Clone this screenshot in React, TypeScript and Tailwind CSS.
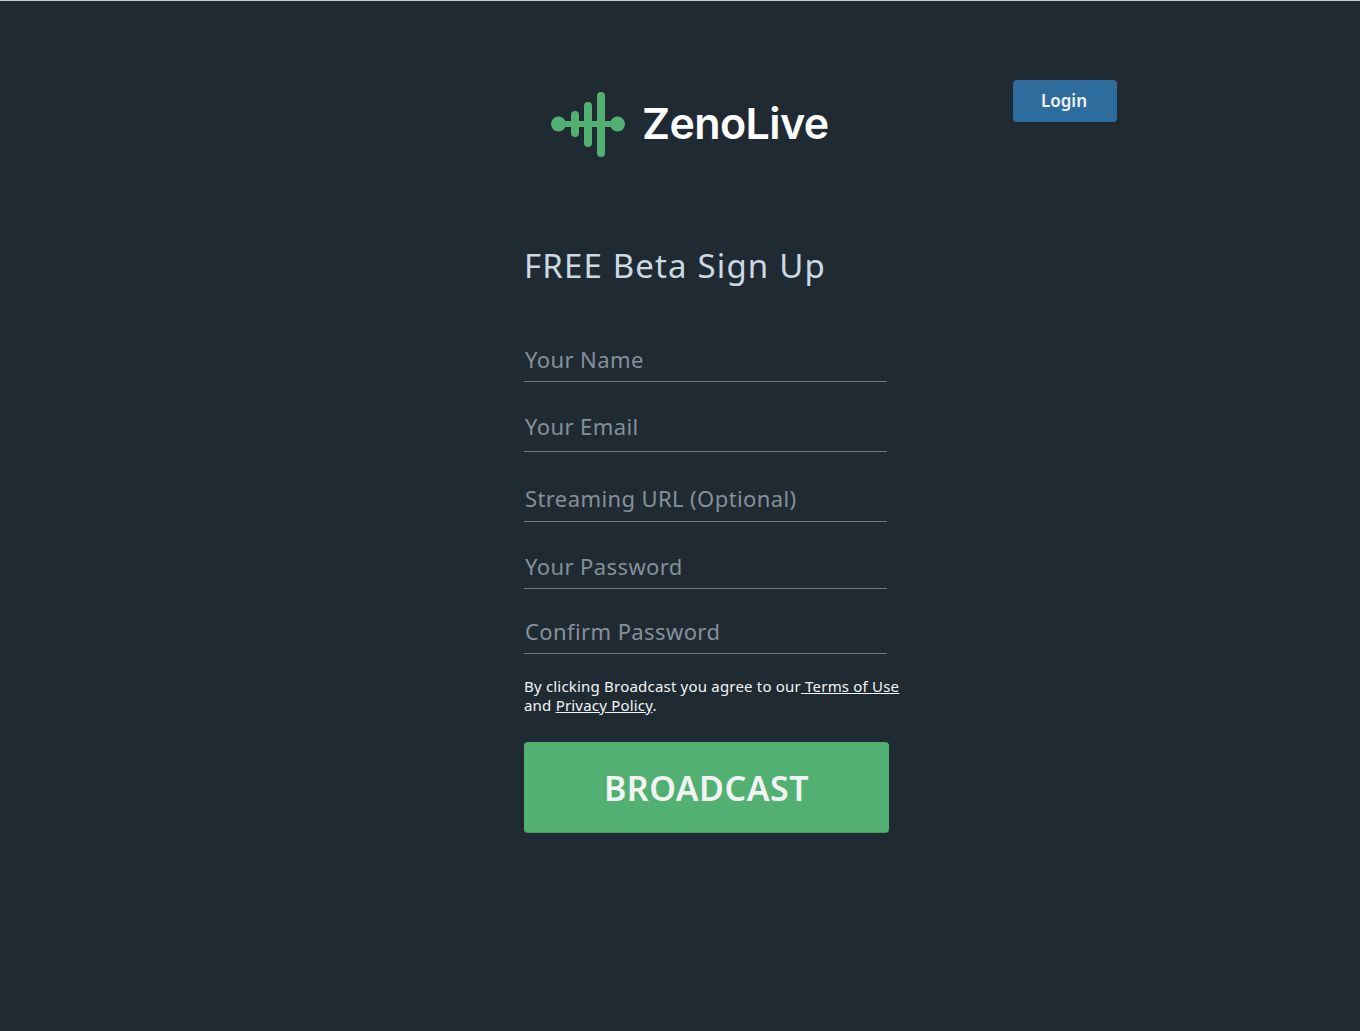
const fontClass = "font-['Noto_Sans','Open_Sans',sans-serif]";

function Logo() {
  return (
    <div className="flex items-center gap-[16px]">
      <svg width="75" height="66" viewBox="0 0 75 66" fill="none">
        <g stroke="#52b073" strokeLinecap="round">
          <line x1="7" y1="32" x2="67" y2="32" strokeWidth="6" />
          <circle cx="7.5" cy="32" r="7.5" fill="#52b073" stroke="none" />
          <circle cx="66.5" cy="32" r="7.5" fill="#52b073" stroke="none" />
          <line x1="24" y1="23" x2="24" y2="41" strokeWidth="8" />
          <line x1="37" y1="14" x2="37" y2="51" strokeWidth="8" />
          <line x1="50" y1="4" x2="50" y2="61" strokeWidth="8" />
        </g>
      </svg>
      <span className="mt-[-3px] font-['Inter',sans-serif] text-[43px] leading-none font-semibold tracking-[-0.6px] text-white">
        ZenoLive
      </span>
    </div>
  );
}

function Field({ placeholder, type = "text", className }: { placeholder: string; type?: string; className: string }) {
  return (
    <input
      type={type}
      placeholder={placeholder}
      className={
        "block h-[46px] w-[363px] border-b border-[#6f7a82] bg-transparent px-px text-[22px] leading-[30px] tracking-[0.4px] text-white outline-none placeholder:text-[#84909a] " +
        className
      }
    />
  );
}

export default function App() {
  return (
    <div className={"min-h-[1031px] border-t border-t-[#c9cccf] bg-[#202a33] " + fontClass}>
      <div className="ml-[524px] w-[593px] pt-[79px]">
        <header className="flex items-start">
          <div className="mt-[12px] ml-[27px]">
            <Logo />
          </div>
          <button className="ml-auto h-[42px] w-[104px] rounded-[4px] bg-[#2f6c9e] pr-[2px] text-[17px] font-semibold text-[#eef2f5]">
            Login
          </button>
        </header>

        <h1 className="mt-[85px] text-[33px] leading-[45px] font-normal tracking-[1.15px] text-[#ccd9e2]">
          FREE Beta Sign Up
        </h1>

        <form className="mt-[48px] flex flex-col">
          <Field placeholder="Your Name" />
          <Field placeholder="Your Email" className="mt-[24px] pb-[5px]" />
          <Field placeholder="Streaming URL (Optional)" className="mt-[24px] pb-px" />
          <Field placeholder="Your Password" type="password" className="mt-[21px]" />
          <Field placeholder="Confirm Password" type="password" className="mt-[19px]" />

          <p className="mt-[23px] w-[380px] text-[15px] leading-[19px] tracking-[0.2px] text-[#f2f5f7]">
            By clicking Broadcast you agree to our<a className="underline" href="#"> Terms of Use</a>
            <br />
            and <a className="underline" href="#">Privacy Policy</a>.
          </p>

          <button
            type="button"
            className="mt-[27px] h-[91px] w-[365px] rounded-[4px] border-b border-b-[#479a64] bg-[#52b073] pt-[3px] text-[34px] font-semibold tracking-[0.5px] text-[#f2f3f3]"
          >
            BROADCAST
          </button>
        </form>
      </div>
    </div>
  );
}
